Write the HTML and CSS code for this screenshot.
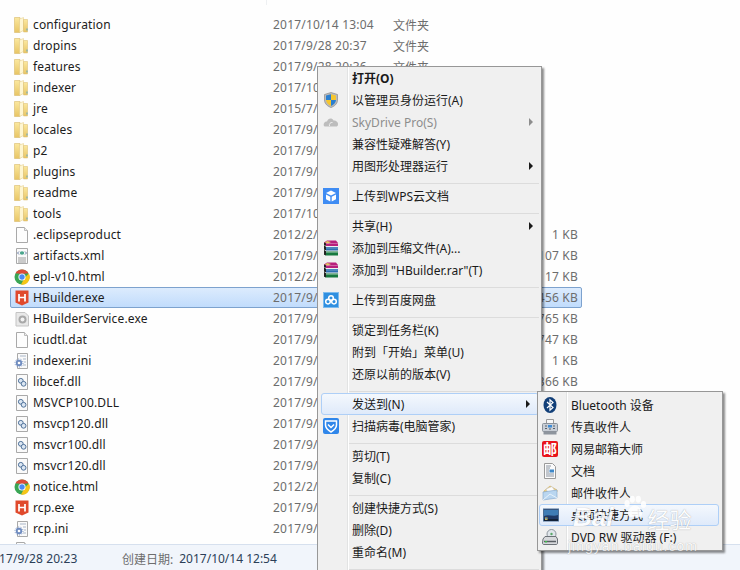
FILE: index.html
```html
<!DOCTYPE html>
<html lang="zh-CN">
<head>
<meta charset="utf-8">
<title>HBuilder</title>
<link rel="stylesheet" href="styles.css">
</head>
<body>
<svg class="defs" width="0" height="0" aria-hidden="true">
  <defs>
    <linearGradient id="fg" x1="0" y1="0" x2="0" y2="1"><stop offset="0" stop-color="#fbe89f"/><stop offset="1" stop-color="#e8c565"/></linearGradient>
    <symbol id="i-folder" viewBox="0 0 16 16">
      <path d="M.5 .5 h5.500 v15 h-5.500 z" fill="url(#fg)" stroke="#d8bb6c" stroke-width=".6"/>
      <path d="M5.500 2 L9.500 .5 V13.500 L5.500 15.500 z" fill="#fef6d2" stroke="#e2c97f" stroke-width=".5"/>
      <path d="M9.500 2.500 h4 v12.500 h-4 z" fill="url(#fg)" stroke="#d8bb6c" stroke-width=".5"/>
      <path d="M13 11.500 v2" stroke="#5aa6c8"/>
    </symbol>
    <symbol id="i-blank" viewBox="0 0 16 16">
      <path d="M2.500 .5 h8 l3 3 v12 h-11 z" fill="#fdfdfd" stroke="#a9a9a9"/>
      <path d="M10.500 .5 v3 h3" fill="#eee" stroke="#bbb"/>
    </symbol>
    <symbol id="i-xml" viewBox="0 0 16 16">
      <path d="M2.500 .5 h11 v15 h-11 z" fill="#fafafa" stroke="#a9a9a9"/>
      <path d="M4 10 h8 M4 12 h8 M4 14 h8" stroke="#9a9a9a"/>
      <ellipse cx="8" cy="5" rx="2.200" ry="1.800" fill="#4aa58c"/>
      <path d="M5 3.500 L3.500 5 L5 6.500 M11 3.500 L12.500 5 L11 6.500" fill="none" stroke="#6a7fa8"/>
    </symbol>
    <symbol id="i-chrome" viewBox="0 0 16 16">
      <circle cx="8" cy="8" r="7.500" fill="#3aa655"/>
      <path d="M1.500 4.200 A7.500 7.500 0 0 1 14.500 4.200 L8 5 Z" fill="#dd4b39"/>
      <path d="M14.800 4.500 A7.500 7.500 0 0 1 7 15.500 L10.500 9 Z" fill="#f5c518"/>
      <circle cx="8" cy="8" r="3.600" fill="#fff"/>
      <circle cx="8" cy="8" r="2.700" fill="#4a8af4"/>
    </symbol>
    <symbol id="i-h" viewBox="0 0 16 16">
      <path d="M1.500 .5 h13 v12 l-6.500 3 l-6.500 -3 z" fill="#e0492c"/>
      <path d="M5 4 v7.500 M11 4 v7.500 M5 7.500 h6" stroke="#fff" stroke-width="1.700" fill="none"/>
    </symbol>
    <symbol id="i-gear" viewBox="0 0 16 16">
      <path d="M2 1.500 h9 l3.500 3.500 v10 h-12.500 z" fill="#e8e8e8" stroke="#c4c4c4"/>
      <circle cx="8.500" cy="8.500" r="4" fill="#a8a8a8"/>
      <circle cx="8.500" cy="8.500" r="2" fill="#f2f2f2"/>
    </symbol>
    <symbol id="i-ini" viewBox="0 0 16 16">
      <path d="M3.500 .5 h10 v15 h-10 z" fill="#fafafa" stroke="#a9a9a9"/>
      <path d="M6 3 h6 M9 6 h3 M10 9 h2 M9 12 h3" stroke="#a9b6c8"/>
      <circle cx="5" cy="10" r="3.200" fill="#6f8cc0"/>
      <circle cx="5" cy="10" r="4" fill="none" stroke="#6f8cc0" stroke-dasharray="1 1.500"/>
      <circle cx="5" cy="10" r="1.300" fill="#fff"/>
    </symbol>
    <symbol id="i-dll" viewBox="0 0 16 16">
      <path d="M2.500 .5 h11 v15 h-11 z" fill="#fafafa" stroke="#a9a9a9"/>
      <circle cx="6.800" cy="6.800" r="2.400" fill="#dbe6f2" stroke="#51739b"/>
      <circle cx="9.600" cy="9.800" r="2.400" fill="#dbe6f2" stroke="#51739b"/>
    </symbol>
    <symbol id="i-uac" viewBox="0 0 16 16">
      <path d="M8 .5 L14.500 2.500 V8 C14.500 12 11 14.500 8 15.500 C5 14.500 1.500 12 1.500 8 V2.500 Z" fill="#bbb" stroke="#8a8a8a" stroke-width=".7"/>
      <path d="M8 2.200 L3 3.600 V8 H8 Z" fill="#2a7fd0"/>
      <path d="M8 2.200 L13 3.600 V8 H8 Z" fill="#f6c62e"/>
      <path d="M3 8 H8 V14 C5.500 13 3.300 11 3 8 Z" fill="#f6c62e"/>
      <path d="M13 8 H8 V14 C10.500 13 12.700 11 13 8 Z" fill="#2a7fd0"/>
    </symbol>
    <symbol id="i-cloud" viewBox="0 0 16 16">
      <path d="M1 12 C0 9.500 2 7 4 7.500 C5 4 9 3.500 10.500 6.500 C12.500 6 15.500 8 15 10.500 C15 12 14 12.500 13 12.500 H3 C2 12.500 1.300 12.500 1 12 Z" fill="#bdbdbd"/>
      <path d="M6.500 12 C5.800 10 7.500 8 9.500 8.500" fill="none" stroke="#eee"/>
    </symbol>
    <symbol id="i-wps" viewBox="0 0 16 16">
      <rect width="16" height="16" fill="#3f8cf3"/>
      <path d="M8 2.500 L13 5 L8 7.500 L3 5 Z M3 6.500 L7.300 8.700 V13.500 L3 11.200 Z M13 6.500 L8.700 8.700 V13.500 L13 11.200 Z" fill="#fff"/>
    </symbol>
    <symbol id="i-rar" viewBox="0 0 16 16">
      <path d="M1 2.500 L4 .5 H13 L15 3 V6 H3 L1 5 Z" fill="#b81f7c"/>
      <path d="M2 2.500 L4 1 L8 2 L5 3.500 Z" fill="#e2c65f"/>
      <path d="M1 6 L3 7 H15 V10.500 H3 L1 9.500 Z" fill="#2c6fb0"/>
      <path d="M1 10.500 L3 11.500 H15 V15.500 H3 L1 14.500 Z" fill="#17793f"/>
      <path d="M3 3.500 H15 M3 8 H15 M3 12.500 H15" stroke="#fff" stroke-opacity=".45" stroke-width=".7"/>
      <path d="M1 2.500 V14.500 L3 15.500 V3.500 Z" fill="#222"/>
      <path d="M1.500 5.500 L3 6.300 M1.500 10 L3 10.800" stroke="#eee" stroke-width=".8"/>
    </symbol>
    <symbol id="i-baidu" viewBox="0 0 16 16">
      <rect x=".5" y=".5" width="15" height="15" fill="#2f8fe0" stroke="#7dbbee"/>
      <g fill="none" stroke="#fff" stroke-width="1.500">
        <circle cx="8" cy="6" r="2.300"/>
        <circle cx="5" cy="9.600" r="2.300"/>
        <circle cx="11" cy="9.600" r="2.300"/>
      </g>
    </symbol>
    <symbol id="i-guard" viewBox="0 0 16 16">
      <rect width="16" height="16" rx="2" fill="#2f86ea"/>
      <path d="M2.500 3 H13.500 V7 C13.500 10 10.500 12.500 8 14 C5.500 12.500 2.500 10 2.500 7 Z" fill="none" stroke="#fff" stroke-width="1.500"/>
      <path d="M5 6.500 L8 9.500 L11 6.500" fill="none" stroke="#fff" stroke-width="1.500"/>
    </symbol>
    <symbol id="i-bt" viewBox="0 0 16 16">
      <ellipse cx="8" cy="8" rx="6.500" ry="8" fill="#123f78"/>
      <path d="M5 5 L11 10.500 L8 13.200 V2.800 L11 5.500 L5 11" fill="none" stroke="#fff" stroke-width="1.200"/>
    </symbol>
    <symbol id="i-fax" viewBox="0 0 16 16">
      <path d="M4.500 .5 h7 v4 h-7 z" fill="#f7f7f7" stroke="#999"/>
      <rect x=".5" y="4.500" width="15" height="8" rx="1" fill="#c8ced6" stroke="#8b929b"/>
      <path d="M1.500 12.500 h13 v3 h-13 z" fill="#8e959e"/>
      <path d="M3 7 h2 M11 7 h2 M3 9.500 h2 M7 10 h2 M11 9.500 h2" stroke="#55606d"/>
      <rect x="6" y="6" width="4" height="2.500" fill="#3d8bd6"/>
    </symbol>
    <symbol id="i-mail163" viewBox="0 0 16 16">
      <rect width="16" height="16" rx="2" fill="#e8141c"/>
      <text x="8" y="13" text-anchor="middle" class="icon-text">邮</text>
    </symbol>
    <symbol id="i-doc" viewBox="0 0 16 16">
      <path d="M2.500 .5 h8 l3 3 v12 h-11 z" fill="#fbfbfb" stroke="#9a9a9a"/>
      <path d="M4 3 h5 M4 5 h4 M4 11 h8 M4 13 h8" stroke="#8a93a0"/>
      <rect x="7.500" y="6.500" width="4.500" height="3" fill="#3f88c8"/>
      <path d="M4 7 h3 M4 9 h3" stroke="#8a93a0"/>
    </symbol>
    <symbol id="i-mailto" viewBox="0 0 16 16">
      <path d="M2 6 L8 1 L15 5 V7 H2 Z" fill="#f6d98a" stroke="#cdaa55" stroke-width=".6"/>
      <path d="M4 4 L10 1.500 L13 6 L6 8 Z" fill="#fbfbfb" stroke="#bbb" stroke-width=".5"/>
      <path d="M1 7 L15 5 V13 L1 15 Z" fill="#b9d6f0" stroke="#7fa5cb" stroke-width=".6"/>
      <path d="M1 15 L8 9 L15 13" fill="none" stroke="#e8f2fb"/>
    </symbol>
    <symbol id="i-desk" viewBox="0 0 16 16">
      <rect x=".5" y="2" width="15" height="12" fill="#1f3a66" stroke="#4c6f95"/>
      <path d="M1 3 H15 V8 C10 10 6 7 1 9 Z" fill="#3f7db5"/>
      <rect x="1" y="12" width="14" height="2" fill="#122238"/>
      <rect x="2" y="10.500" width="2.500" height="2.500" fill="#e6b74a"/>
      <rect x="2.600" y="11" width="1.200" height="1.200" fill="#2f9fd8"/>
    </symbol>
    <symbol id="i-dvd" viewBox="0 0 16 16">
      <circle cx="9.500" cy="5" r="4.500" fill="#dfe5ea" stroke="#8e969e"/>
      <circle cx="9.500" cy="5" r="1.200" fill="#5aa86a"/>
      <path d="M1 10 L3 7.500 H14 L15.500 10 V14 C15.500 15 15 15.500 14 15.500 H2 C1 15.500 .5 15 .5 14 Z" fill="#d7d9dc" stroke="#6d7278"/>
      <path d="M2 12.500 H14" stroke="#5a5f64" stroke-width="1.500"/>
      <rect x="3" y="12" width="2" height="1.400" fill="#3ec24a"/>
    </symbol>
  </defs>
</svg>

<div class="explorer">
  <div class="list-head"><span class="col-mark"></span></div>
  <ul class="files">
    <li class="row"><svg class="ficon"><use href="#i-folder"/></svg><span class="name">configuration</span><span class="date">2017/10/14 13:04</span><span class="type">文件夹</span><span class="size"></span></li>
    <li class="row"><svg class="ficon"><use href="#i-folder"/></svg><span class="name">dropins</span><span class="date">2017/9/28 20:37</span><span class="type">文件夹</span><span class="size"></span></li>
    <li class="row"><svg class="ficon"><use href="#i-folder"/></svg><span class="name">features</span><span class="date">2017/9/28 20:36</span><span class="type">文件夹</span><span class="size"></span></li>
    <li class="row"><svg class="ficon"><use href="#i-folder"/></svg><span class="name">indexer</span><span class="date">2017/10/14 13:04</span><span class="type">文件夹</span><span class="size"></span></li>
    <li class="row"><svg class="ficon"><use href="#i-folder"/></svg><span class="name">jre</span><span class="date">2015/7/20 10:12</span><span class="type">文件夹</span><span class="size"></span></li>
    <li class="row"><svg class="ficon"><use href="#i-folder"/></svg><span class="name">locales</span><span class="date">2017/9/28 20:37</span><span class="type">文件夹</span><span class="size"></span></li>
    <li class="row"><svg class="ficon"><use href="#i-folder"/></svg><span class="name">p2</span><span class="date">2017/9/28 20:37</span><span class="type">文件夹</span><span class="size"></span></li>
    <li class="row"><svg class="ficon"><use href="#i-folder"/></svg><span class="name">plugins</span><span class="date">2017/9/28 20:37</span><span class="type">文件夹</span><span class="size"></span></li>
    <li class="row"><svg class="ficon"><use href="#i-folder"/></svg><span class="name">readme</span><span class="date">2017/9/28 20:37</span><span class="type">文件夹</span><span class="size"></span></li>
    <li class="row"><svg class="ficon"><use href="#i-folder"/></svg><span class="name">tools</span><span class="date">2017/10/14 13:04</span><span class="type">文件夹</span><span class="size"></span></li>
    <li class="row"><svg class="ficon"><use href="#i-blank"/></svg><span class="name">.eclipseproduct</span><span class="date">2012/2/8 16:20</span><span class="type">文件</span><span class="size">1 KB</span></li>
    <li class="row"><svg class="ficon"><use href="#i-xml"/></svg><span class="name">artifacts.xml</span><span class="date">2017/9/28 20:23</span><span class="type">文件</span><span class="size">107 KB</span></li>
    <li class="row"><svg class="ficon"><use href="#i-chrome"/></svg><span class="name">epl-v10.html</span><span class="date">2012/2/8 16:20</span><span class="type">文件</span><span class="size">17 KB</span></li>
    <li class="row row-selected"><svg class="ficon"><use href="#i-h"/></svg><span class="name">HBuilder.exe</span><span class="date">2017/9/28 20:23</span><span class="type">应用程序</span><span class="size">456 KB</span></li>
    <li class="row"><svg class="ficon"><use href="#i-gear"/></svg><span class="name">HBuilderService.exe</span><span class="date">2017/9/28 20:23</span><span class="type">应用程序</span><span class="size">765 KB</span></li>
    <li class="row"><svg class="ficon"><use href="#i-blank"/></svg><span class="name">icudtl.dat</span><span class="date">2017/9/28 20:23</span><span class="type">文件</span><span class="size">747 KB</span></li>
    <li class="row"><svg class="ficon"><use href="#i-ini"/></svg><span class="name">indexer.ini</span><span class="date">2017/9/28 20:23</span><span class="type">文件</span><span class="size">1 KB</span></li>
    <li class="row"><svg class="ficon"><use href="#i-dll"/></svg><span class="name">libcef.dll</span><span class="date">2017/9/28 20:23</span><span class="type">文件</span><span class="size">366 KB</span></li>
    <li class="row"><svg class="ficon"><use href="#i-dll"/></svg><span class="name">MSVCP100.DLL</span><span class="date">2017/9/28 20:23</span><span class="type">文件</span><span class="size"></span></li>
    <li class="row"><svg class="ficon"><use href="#i-dll"/></svg><span class="name">msvcp120.dll</span><span class="date">2017/9/28 20:23</span><span class="type">文件</span><span class="size"></span></li>
    <li class="row"><svg class="ficon"><use href="#i-dll"/></svg><span class="name">msvcr100.dll</span><span class="date">2017/9/28 20:23</span><span class="type">文件</span><span class="size"></span></li>
    <li class="row"><svg class="ficon"><use href="#i-dll"/></svg><span class="name">msvcr120.dll</span><span class="date">2017/9/28 20:23</span><span class="type">文件</span><span class="size"></span></li>
    <li class="row"><svg class="ficon"><use href="#i-chrome"/></svg><span class="name">notice.html</span><span class="date">2012/2/8 16:20</span><span class="type">文件</span><span class="size"></span></li>
    <li class="row"><svg class="ficon"><use href="#i-h"/></svg><span class="name">rcp.exe</span><span class="date">2017/9/28 20:23</span><span class="type">文件</span><span class="size"></span></li>
    <li class="row"><svg class="ficon"><use href="#i-ini"/></svg><span class="name">rcp.ini</span><span class="date">2017/9/28 20:23</span><span class="type">文件</span><span class="size"></span></li>
    <li class="row"><svg class="ficon"><use href="#i-blank"/></svg></li>
  </ul>
  <div class="status">
    <span class="st-val st-mod">17/9/28 20:23</span>
    <span class="st-label">创建日期:</span>
    <span class="st-val">2017/10/14 12:54</span>
  </div>
</div>

<div class="menu main-menu">
  <div class="mi mi-strong"><span class="mi-icon"></span><span class="mi-text">打开(O)</span></div>
  <div class="mi"><span class="mi-icon"><svg class="micon"><use href="#i-uac"/></svg></span><span class="mi-text">以管理员身份运行(A)</span></div>
  <div class="mi mi-off"><span class="mi-icon"><svg class="micon"><use href="#i-cloud"/></svg></span><span class="mi-text">SkyDrive Pro(S)</span><span class="arrow"></span></div>
  <div class="mi"><span class="mi-icon"></span><span class="mi-text">兼容性疑难解答(Y)</span></div>
  <div class="mi"><span class="mi-icon"></span><span class="mi-text">用图形处理器运行</span><span class="arrow"></span></div>
  <div class="sep"></div>
  <div class="mi"><span class="mi-icon"><svg class="micon"><use href="#i-wps"/></svg></span><span class="mi-text">上传到WPS云文档</span></div>
  <div class="sep"></div>
  <div class="mi"><span class="mi-icon"></span><span class="mi-text">共享(H)</span><span class="arrow"></span></div>
  <div class="mi"><span class="mi-icon"><svg class="micon"><use href="#i-rar"/></svg></span><span class="mi-text">添加到压缩文件(A)...</span></div>
  <div class="mi"><span class="mi-icon"><svg class="micon"><use href="#i-rar"/></svg></span><span class="mi-text">添加到 "HBuilder.rar"(T)</span></div>
  <div class="sep"></div>
  <div class="mi"><span class="mi-icon"><svg class="micon"><use href="#i-baidu"/></svg></span><span class="mi-text">上传到百度网盘</span></div>
  <div class="sep"></div>
  <div class="mi"><span class="mi-icon"></span><span class="mi-text">锁定到任务栏(K)</span></div>
  <div class="mi"><span class="mi-icon"></span><span class="mi-text">附到「开始」菜单(U)</span></div>
  <div class="mi"><span class="mi-icon"></span><span class="mi-text">还原以前的版本(V)</span></div>
  <div class="sep"></div>
  <div class="mi mi-on"><span class="mi-icon"></span><span class="mi-text">发送到(N)</span><span class="arrow"></span></div>
  <div class="mi"><span class="mi-icon"><svg class="micon"><use href="#i-guard"/></svg></span><span class="mi-text">扫描病毒(电脑管家)</span></div>
  <div class="sep"></div>
  <div class="mi"><span class="mi-icon"></span><span class="mi-text">剪切(T)</span></div>
  <div class="mi"><span class="mi-icon"></span><span class="mi-text">复制(C)</span></div>
  <div class="sep"></div>
  <div class="mi"><span class="mi-icon"></span><span class="mi-text">创建快捷方式(S)</span></div>
  <div class="mi"><span class="mi-icon"></span><span class="mi-text">删除(D)</span></div>
  <div class="mi"><span class="mi-icon"></span><span class="mi-text">重命名(M)</span></div>
  <div class="sep"></div>
</div>

<div class="menu sub-menu">
  <div class="mi"><span class="mi-icon"><svg class="micon"><use href="#i-bt"/></svg></span><span class="mi-text">Bluetooth 设备</span></div>
  <div class="mi"><span class="mi-icon"><svg class="micon"><use href="#i-fax"/></svg></span><span class="mi-text">传真收件人</span></div>
  <div class="mi"><span class="mi-icon"><svg class="micon"><use href="#i-mail163"/></svg></span><span class="mi-text">网易邮箱大师</span></div>
  <div class="mi"><span class="mi-icon"><svg class="micon"><use href="#i-doc"/></svg></span><span class="mi-text">文档</span></div>
  <div class="mi"><span class="mi-icon"><svg class="micon"><use href="#i-mailto"/></svg></span><span class="mi-text">邮件收件人</span></div>
  <div class="mi mi-on"><span class="mi-icon"><svg class="micon"><use href="#i-desk"/></svg></span><span class="mi-text">桌面快捷方式</span></div>
  <div class="mi"><span class="mi-icon"><svg class="micon"><use href="#i-dvd"/></svg></span><span class="mi-text">DVD RW 驱动器 (F:)</span></div>
</div>

<div class="watermark">
  <div class="wm-top"><span class="wm-bai">Bai</span><svg class="wm-paw" viewBox="0 0 30 30"><g fill="#fff"><ellipse cx="7" cy="11" rx="3" ry="4"/><ellipse cx="13" cy="6" rx="3" ry="4"/><ellipse cx="20" cy="6" rx="3" ry="4"/><ellipse cx="26" cy="12" rx="3" ry="4"/><path d="M16 13 C11 13 7 20 8 24 C9 28 13 26 16 26 C19 26 23 28 24 24 C25 20 21 13 16 13 Z"/></g></svg><span class="wm-cn">经验</span></div>
  <div class="wm-url">jingyan.baidu.com</div>
</div>
</body>
</html>
```
FILE: styles.css
```css
* { box-sizing: border-box; }
html, body { margin: 0; height: 100%; overflow: hidden; }
body {
  position: relative;
  width: 740px;
  height: 570px;
  background: #fefefe;
  font-family: "Noto Sans", "Noto Sans CJK SC", sans-serif;
  font-size: 12px;
  color: #1c1c1c;
}
.defs { position: absolute; }
.icon-text { font-family: "Noto Sans CJK SC", sans-serif; font-size: 14px; font-weight: 700; fill: #fff; }

.explorer { display: flex; flex-direction: column; height: 570px; }
.list-head { height: 14px; flex: none; }
.col-mark { display: block; width: 1px; height: 5px; margin-left: 266px; background: #eef0f2; }
.files { flex: 1; min-height: 0; margin: 0; padding: 0 0 0 10px; list-style: none; overflow: hidden; }
.row {
  display: flex;
  align-items: center;
  width: 572px;
  height: 21px;
  padding-left: 4px;
  border: 1px solid transparent;
  border-left-width: 0;
  border-right-width: 0;
  white-space: nowrap;
}
.row-selected {
  border: 1px solid #7da2ce;
  border-radius: 2px;
  padding-left: 3px;
  background: linear-gradient(#dcebfd, #c1dcfc);
}
.ficon { flex: none; width: 16px; height: 16px; }
.name { width: 243px; padding-left: 3px; letter-spacing: .13px; }
.date { width: 120px; color: #6d6d6d; letter-spacing: .2px; }
.type { width: 100px; color: #6d6d6d; }
.size { width: 85px; text-align: right; color: #6d6d6d; letter-spacing: .2px; }

.status {
  flex: none;
  display: flex;
  align-items: center;
  height: 26px;
  padding-top: 2px;
  background: #f1f5fb;
  border-top: 1px solid #d6e0ee;
  white-space: nowrap;
}
.st-val { color: #2c3f58; }
.st-mod { margin-left: -1px; width: 123px; letter-spacing: .1px; }
.st-label { color: #6d6d6d; margin-right: 6px; }

.menu {
  position: absolute;
  background: #f0f0f0;
  border: 1px solid #979797;
  box-shadow: 2px 2px 2px rgba(0, 0, 0, .45);
  font-size: 12px;
  color: #1a1a1a;
}
.menu::before {
  content: "";
  position: absolute;
  top: 0;
  bottom: 0;
  width: 2px;
  background: linear-gradient(90deg, #e2e3e3 50%, #fff 50%);
}
.main-menu { left: 317px; top: 66px; width: 225px; height: 520px; padding-left: 2px; }
.main-menu::before { left: 29px; }
.sub-menu { left: 537px; top: 391px; width: 186px; padding: 2px 3px 2px 1px; }
.sub-menu::before { left: 28px; }

.mi { display: flex; align-items: center; height: 22px; position: relative; white-space: nowrap; }
.mi-icon { flex: none; width: 32px; display: flex; justify-content: center; padding-right: 10px; }
.micon { width: 16px; height: 16px; display: block; }
.mi-text { flex: 1; }
.mi-strong .mi-text { font-weight: 700; }
.mi-off { color: #8d8d8d; }
.arrow {
  width: 0;
  height: 0;
  margin-right: 8px;
  border-left: 4px solid #1a1a1a;
  border-top: 4px solid transparent;
  border-bottom: 4px solid transparent;
}
.mi-off .arrow { border-left-color: #8d8d8d; }
.mi-on {
  background: linear-gradient(#f4f8fd, #dfeafa);
  border: 1px solid #aecff7;
  border-radius: 3px;
}
.main-menu .mi-on { margin-left: 1px; margin-right: 2px; }
.main-menu .mi-on .mi-icon { width: 30px; }
.sub-menu .mi-icon { width: 31px; padding-right: 9px; }
.sub-menu .mi-on .mi-icon { width: 30px; }
.sub-menu .mi-text { padding-left: 1px; }
.sep {
  height: 8px;
  margin: 0 2px 0 28px;
  padding: 6px 0 1px;
  background-clip: content-box;
  background-color: #dcdcdc;
}

.watermark {
  position: absolute;
  left: 568px;
  top: 494px;
  width: 135px;
  color: #fff;
  pointer-events: none;
}
.wm-top { display: flex; align-items: flex-end; height: 36px; opacity: .88; text-shadow: 0 0 1px rgba(110, 110, 110, .7); }
.wm-bai { font-family: "Liberation Sans", sans-serif; font-size: 26px; line-height: 26px; font-weight: 700; font-style: italic; margin-left: 5px; }
.wm-paw { width: 26px; height: 26px; flex: none; align-self: flex-start; margin-left: 8px; }
.wm-cn { font-family: "Noto Sans CJK SC", sans-serif; font-size: 22px; line-height: 24px; }
.wm-url { font-family: "Liberation Sans", sans-serif; font-size: 14px; line-height: 16px; margin-top: 8px; opacity: .7; letter-spacing: 1px; white-space: nowrap; text-shadow: 0 0 1px rgba(90, 90, 90, .7); }
```
